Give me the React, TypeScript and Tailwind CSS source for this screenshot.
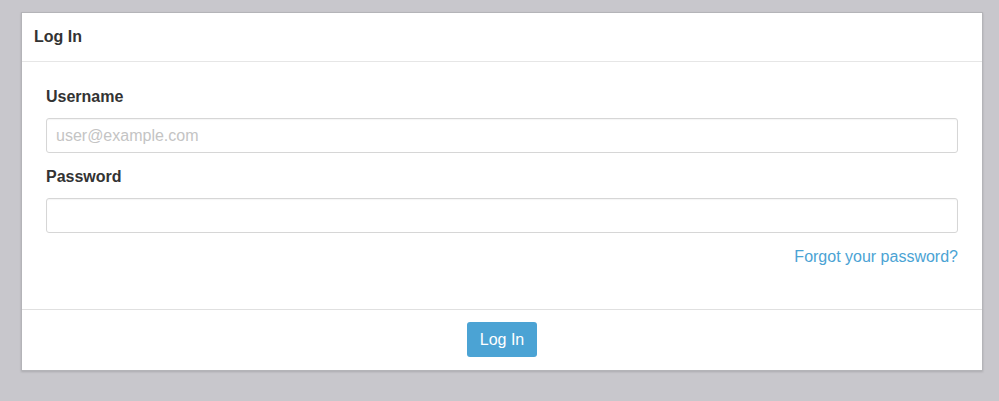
export default function App() {
  return (
    <div
      className="min-h-[401px] bg-[#c8c7cc] pt-3 pl-[21px] pr-4 pb-[30px]"
      style={{ fontFamily: '"Liberation Sans", Arial, sans-serif' }}
    >
      <div className="w-[962px] border border-[#b4b4b8] bg-white shadow-[0_1px_2px_rgba(0,0,0,0.15)]">
        {/* Header */}
        <div className="flex h-[49px] items-center border-b border-[#e6e6e6] px-3">
          <h3 className="text-[16px] font-bold text-[#333]">Log In</h3>
        </div>

        {/* Body */}
        <div className="px-6 pt-6 pb-[42px]">
          <label className="mb-[10px] block h-[22px] text-[16px] leading-[22px] font-bold text-[#333]">
            Username
          </label>
          <input
            type="text"
            placeholder="user@example.com"
            className="block h-[35px] w-full rounded-[3px] border border-[#d6d6d6] px-[9px] text-[16px] text-[#333] outline-none placeholder:text-[#c4c4c4] shadow-[inset_0_1px_1px_rgba(0,0,0,0.04)]"
          />
          <label className="mt-[13px] mb-[10px] block h-[22px] text-[16px] leading-[22px] font-bold text-[#333]">
            Password
          </label>
          <input
            type="password"
            className="block h-[35px] w-full rounded-[3px] border border-[#d6d6d6] px-[9px] text-[16px] text-[#333] outline-none shadow-[inset_0_1px_1px_rgba(0,0,0,0.04)]"
          />
          <div className="mt-[14px] flex h-[20px] justify-end">
            <a className="text-[16px] leading-[20px] text-[#4ba3d4]" href="#">
              Forgot your password?
            </a>
          </div>
        </div>

        {/* Footer */}
        <div className="flex justify-center border-t border-[#e0e0e0] pt-3 pb-[13px]">
          <button className="h-[35px] rounded-[3px] bg-[#4ba3d4] px-[13px] text-[16px] text-white">
            Log In
          </button>
        </div>
      </div>
    </div>
  )
}
